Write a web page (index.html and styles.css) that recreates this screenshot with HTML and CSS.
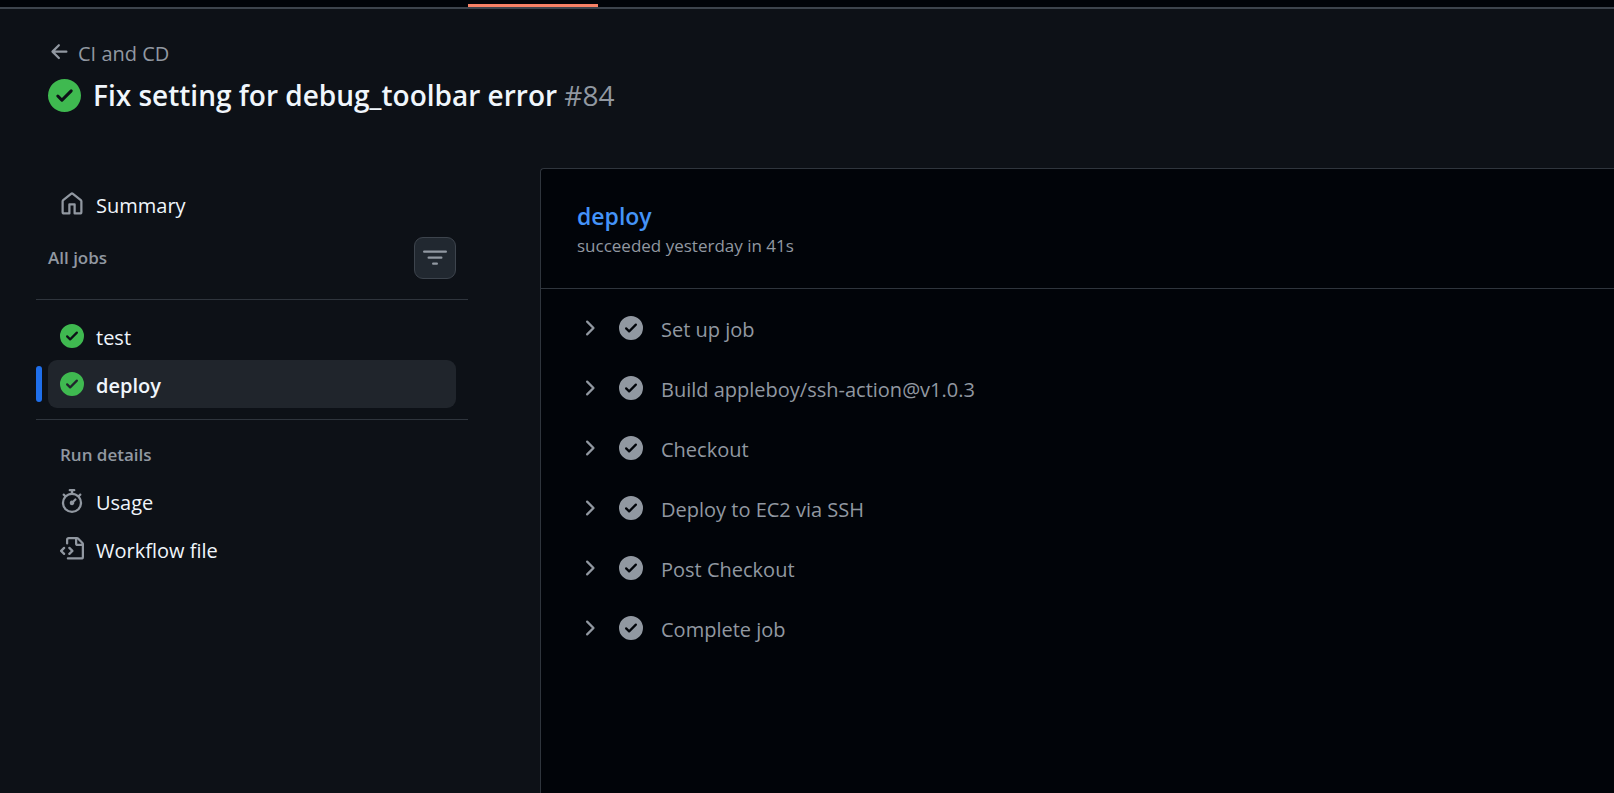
FILE: index.html
```
<!DOCTYPE html>
<html lang="en">
<head>
<meta charset="UTF-8" />
<meta name="viewport" content="width=device-width, initial-scale=1" />
<title>Fix setting for debug_toolbar error</title>
<link rel="stylesheet" href="styles.css">
</head>
<body>
  <!-- Icon set -->
  <svg class="sprite" aria-hidden="true">
    <symbol id="icon-check" viewBox="0 0 16 16"><path d="M8 16A8 8 0 1 1 8 0a8 8 0 0 1 0 16Zm3.78-9.72a.751.751 0 0 0-.018-1.042.751.751 0 0 0-1.042-.018L6.75 9.19 5.28 7.72a.751.751 0 0 0-1.042.018.751.751 0 0 0-.018 1.042l2 2a.75.75 0 0 0 1.06 0Z"/></symbol>
    <symbol id="icon-chevron" viewBox="0 0 16 16"><path d="M6.22 3.22a.75.75 0 0 1 1.06 0l4.25 4.25a.75.75 0 0 1 0 1.06l-4.25 4.25a.751.751 0 0 1-1.042-.018.751.751 0 0 1-.018-1.042L9.94 8 6.22 4.28a.75.75 0 0 1 0-1.06Z"/></symbol>
    <symbol id="icon-arrow" viewBox="0 0 16 16"><path d="M7.78 12.53a.75.75 0 0 1-1.06 0L2.47 8.28a.75.75 0 0 1 0-1.06l4.25-4.25a.751.751 0 0 1 1.042.018.751.751 0 0 1 .018 1.042L4.81 7h7.44a.75.75 0 0 1 0 1.5H4.81l2.97 2.97a.75.75 0 0 1 0 1.06Z"/></symbol>
    <symbol id="icon-home" viewBox="0 0 16 16"><path d="M6.906.664a1.749 1.749 0 0 1 2.187 0l5.25 4.2c.415.332.657.835.657 1.367v7.019A1.75 1.75 0 0 1 13.25 15h-3.5a.75.75 0 0 1-.75-.75V9H7v5.25a.75.75 0 0 1-.75.75h-3.5A1.75 1.75 0 0 1 1 13.25V6.23c0-.531.242-1.034.657-1.366l5.25-4.2Zm1.25 1.171a.25.25 0 0 0-.312 0l-5.25 4.2a.25.25 0 0 0-.094.196v7.019c0 .138.112.25.25.25H5.5V8.25a.75.75 0 0 1 .75-.75h3.5a.75.75 0 0 1 .75.75v5.25h2.75a.25.25 0 0 0 .25-.25V6.23a.25.25 0 0 0-.094-.195Z"/></symbol>
    <symbol id="icon-filter" viewBox="0 0 16 16"><path d="M.75 3h14.5a.75.75 0 0 1 0 1.5H.75a.75.75 0 0 1 0-1.5ZM3 7.75A.75.75 0 0 1 3.75 7h8.5a.75.75 0 0 1 0 1.5h-8.5A.75.75 0 0 1 3 7.75Zm3 4a.75.75 0 0 1 .75-.75h2.5a.75.75 0 0 1 0 1.5h-2.5a.75.75 0 0 1-.75-.75Z"/></symbol>
    <symbol id="icon-stopwatch" viewBox="0 0 16 16"><path d="M5.75.75A.75.75 0 0 1 6.5 0h3a.75.75 0 0 1 0 1.5h-.75v1l-.001.041a6.724 6.724 0 0 1 3.464 1.435l.007-.006.75-.75a.749.749 0 0 1 1.275.326.749.749 0 0 1-.215.734l-.75.75-.006.007a6.75 6.75 0 1 1-10.548 0L2.72 5.03l-.75-.75a.751.751 0 0 1 .018-1.042.751.751 0 0 1 1.042-.018l.75.75.007.006A6.72 6.72 0 0 1 7.25 2.541V1.5H6.5a.75.75 0 0 1-.75-.75ZM8 14.5a5.25 5.25 0 1 0-.001-10.501A5.25 5.25 0 0 0 8 14.5Zm.389-6.7 1.33-1.33a.75.75 0 1 1 1.061 1.06L9.45 8.861A1.503 1.503 0 0 1 8 10.75a1.499 1.499 0 1 1 .389-2.95Z"/></symbol>
    <symbol id="icon-file" viewBox="0 0 16 16"><path d="M4 1.75C4 .784 4.784 0 5.75 0h5.586c.464 0 .909.184 1.237.513l2.914 2.914c.329.328.513.773.513 1.237v8.586A1.75 1.75 0 0 1 14.25 15h-9a.75.75 0 0 1 0-1.5h9a.25.25 0 0 0 .25-.25V6h-2.75A1.75 1.75 0 0 1 10 4.25V1.5H5.75a.25.25 0 0 0-.25.25v2.5a.75.75 0 0 1-1.5 0Zm1.72 4.97a.75.75 0 0 1 1.06 0l2 2a.75.75 0 0 1 0 1.06l-2 2a.749.749 0 0 1-1.275-.326.749.749 0 0 1 .215-.734l1.47-1.47-1.47-1.47a.75.75 0 0 1 0-1.06ZM3.28 7.78 1.81 9.25l1.47 1.47a.751.751 0 0 1-.018 1.042.751.751 0 0 1-1.042.018l-2-2a.75.75 0 0 1 0-1.06l2-2a.751.751 0 0 1 1.042.018.751.751 0 0 1 .018 1.042Zm8.22-6.218V4.25c0 .138.112.25.25.25h2.688l-.011-.013-2.914-2.914-.013-.011Z"/></symbol>
  </svg>

  <div class="topbar"><div class="active-tab"></div></div>

  <header class="run-header">
    <a class="back-link" href="#">
      <svg class="icon" aria-hidden="true"><use href="#icon-arrow"/></svg>
      <span class="label">CI and CD</span>
    </a>
    <div class="run-title">
      <svg class="icon icon-large success" aria-hidden="true"><use href="#icon-check"/></svg>
      <h1>Fix setting for debug_toolbar error <span class="run-number">#84</span></h1>
    </div>
  </header>

  <div class="layout">
    <nav class="sidebar" aria-label="Workflow run">
      <a class="nav-item" href="#">
        <svg class="icon" aria-hidden="true"><use href="#icon-home"/></svg>
        <span class="label">Summary</span>
      </a>

      <div class="jobs-header">
        <h2>All jobs</h2>
        <button class="filter-button" type="button" aria-label="Filter jobs">
          <svg class="icon" aria-hidden="true"><use href="#icon-filter"/></svg>
        </button>
      </div>

      <div class="jobs">
        <a class="nav-item" href="#">
          <svg class="icon success" aria-hidden="true"><use href="#icon-check"/></svg>
          <span class="label">test</span>
        </a>
        <a class="nav-item selected" href="#" aria-current="page">
          <svg class="icon success" aria-hidden="true"><use href="#icon-check"/></svg>
          <span class="label">deploy</span>
        </a>
      </div>

      <h2 class="details-heading">Run details</h2>
      <a class="nav-item" href="#">
        <svg class="icon" aria-hidden="true"><use href="#icon-stopwatch"/></svg>
        <span class="label">Usage</span>
      </a>
      <a class="nav-item" href="#">
        <svg class="icon" aria-hidden="true"><use href="#icon-file"/></svg>
        <span class="label">Workflow file</span>
      </a>
    </nav>

    <main class="job-panel">
      <div class="job-header">
        <h2><a href="#">deploy</a></h2>
        <p>succeeded yesterday in 41s</p>
      </div>

      <div class="steps">
        <button class="step" type="button" aria-expanded="false">
          <svg class="icon" aria-hidden="true"><use href="#icon-chevron"/></svg>
          <svg class="icon" aria-hidden="true"><use href="#icon-check"/></svg>
          <span class="label">Set up job</span>
        </button>
        <button class="step" type="button" aria-expanded="false">
          <svg class="icon" aria-hidden="true"><use href="#icon-chevron"/></svg>
          <svg class="icon" aria-hidden="true"><use href="#icon-check"/></svg>
          <span class="label">Build appleboy/ssh-action@v1.0.3</span>
        </button>
        <button class="step" type="button" aria-expanded="false">
          <svg class="icon" aria-hidden="true"><use href="#icon-chevron"/></svg>
          <svg class="icon" aria-hidden="true"><use href="#icon-check"/></svg>
          <span class="label">Checkout</span>
        </button>
        <button class="step" type="button" aria-expanded="false">
          <svg class="icon" aria-hidden="true"><use href="#icon-chevron"/></svg>
          <svg class="icon" aria-hidden="true"><use href="#icon-check"/></svg>
          <span class="label">Deploy to EC2 via SSH</span>
        </button>
        <button class="step" type="button" aria-expanded="false">
          <svg class="icon" aria-hidden="true"><use href="#icon-chevron"/></svg>
          <svg class="icon" aria-hidden="true"><use href="#icon-check"/></svg>
          <span class="label">Post Checkout</span>
        </button>
        <button class="step" type="button" aria-expanded="false">
          <svg class="icon" aria-hidden="true"><use href="#icon-chevron"/></svg>
          <svg class="icon" aria-hidden="true"><use href="#icon-check"/></svg>
          <span class="label">Complete job</span>
        </button>
      </div>
    </main>
  </div>
</body>
</html>
```
FILE: styles.css
```
/* Reset */
* {
  box-sizing: border-box;
}

body {
  margin: 0;
  min-height: 100vh;
  display: flex;
  flex-direction: column;
  background: #0d1117;
  color: #f0f6fc;
  font-family: 'Segoe UI', 'Open Sans', sans-serif;
  font-size: 20px;
  line-height: 30px;
}

h1, h2, p {
  margin: 0;
}

a {
  color: inherit;
  text-decoration: none;
}

button {
  font: inherit;
  cursor: pointer;
}

.sprite {
  display: none;
}

.icon {
  width: 24px;
  height: 24px;
  flex-shrink: 0;
  fill: #9198a1;
}

.icon-large {
  width: 33px;
  height: 33px;
}

.icon.success {
  fill: #3fb950;
}

.label {
  padding-top: 4px;
}

/* Bottom edge of the repository tabs */
.topbar {
  height: 9px;
  padding: 4px 0 0 468px;
  background: #010409;
  border-bottom: 2px solid #3d444d;
}

.active-tab {
  width: 130px;
  height: 3px;
  background: #f78166;
}

/* Run header */
.run-header {
  padding: 26px 48px 0;
}

.back-link {
  display: flex;
  align-items: center;
  gap: 6px;
  width: fit-content;
  color: #9198a1;
}

.run-title {
  display: flex;
  align-items: center;
  gap: 12px;
  margin-top: 6px;
}

.run-title h1 {
  font-size: 28px;
  font-weight: 600;
  line-height: 41px;
}

.run-number {
  color: #9198a1;
  font-weight: 400;
}

/* Two columns */
.layout {
  flex: 1;
  display: flex;
  gap: 72px;
  margin-top: 52px;
  padding-left: 36px;
}

.sidebar {
  width: 432px;
  flex-shrink: 0;
  padding-top: 12px;
}

.nav-item {
  display: flex;
  align-items: center;
  gap: 12px;
  height: 48px;
  margin: 0 12px;
  padding: 0 12px;
  border-radius: 9px;
}

.nav-item:hover {
  background: #151b23;
}

.nav-item.selected {
  position: relative;
  background: #20252c;
  font-weight: 600;
}

.nav-item.selected::before {
  content: '';
  position: absolute;
  top: 6px;
  left: -12px;
  width: 6px;
  height: 36px;
  background: #1f6feb;
  border-radius: 9px;
}

.sidebar h2 {
  color: #9198a1;
  font-size: 17px;
  font-weight: 600;
  line-height: 24px;
}

.jobs-header {
  display: flex;
  align-items: center;
  justify-content: space-between;
  padding: 9px 12px 20px;
}

.filter-button {
  display: flex;
  align-items: center;
  justify-content: center;
  width: 42px;
  height: 42px;
  padding: 0;
  background: #212830;
  border: 1px solid #3d444d;
  border-radius: 9px;
}

.jobs {
  padding: 12px 0 11px;
  border: solid #2f353d;
  border-width: 1px 0;
}

.sidebar .details-heading {
  padding: 23px 24px 10px;
}

/* Job log */
.job-panel {
  flex: 1;
  background: #010409;
  border: solid #2f353d;
  border-width: 1px 0 0 1px;
  border-top-left-radius: 4px;
}

.job-header {
  padding: 32px 36px 31px;
  border-bottom: 1px solid #2f353d;
}

.job-header h2 {
  color: #4493f8;
  font-size: 23px;
  font-weight: 600;
  line-height: 30px;
}

.job-header p {
  color: #9198a1;
  font-size: 17px;
  line-height: 22px;
  margin-top: 4px;
}

.steps {
  padding: 9px 0 9px 24px;
}

.step {
  display: flex;
  align-items: center;
  gap: 18px;
  width: 100%;
  height: 60px;
  padding: 0 12px;
  background: none;
  border: none;
  color: #9198a1;
  text-align: left;
}

.step:hover {
  color: #f0f6fc;
}
```
